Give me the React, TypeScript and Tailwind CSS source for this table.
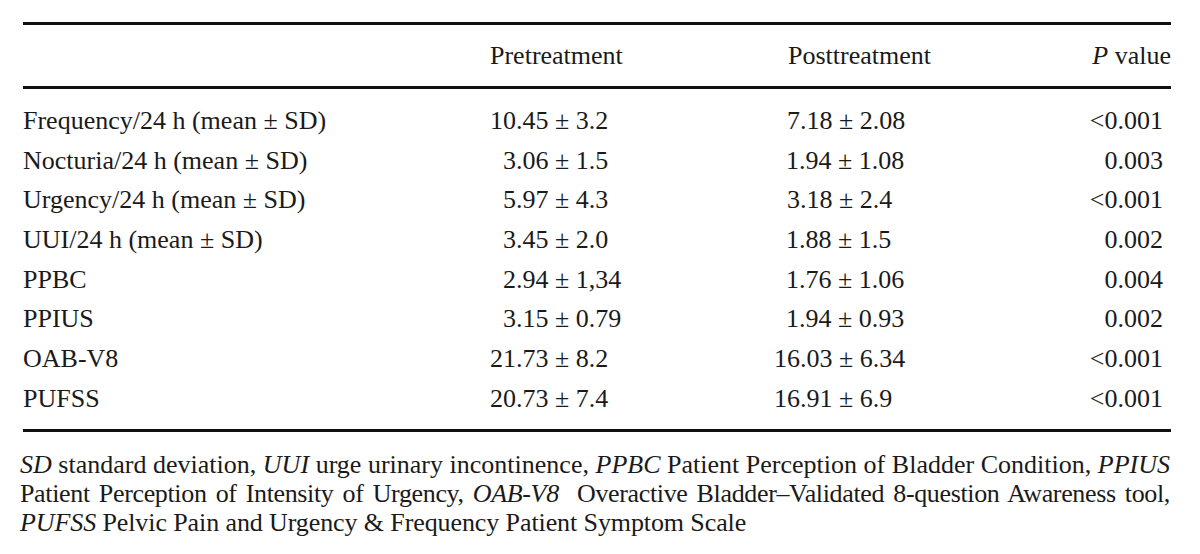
const rows: [string, string, string, string][] = [
  ["Frequency/24 h (mean ± SD)", "10.45 ± 3.2", "7.18 ± 2.08", "<0.001"],
  ["Nocturia/24 h (mean ± SD)", "3.06 ± 1.5", "1.94 ± 1.08", "0.003"],
  ["Urgency/24 h (mean ± SD)", "5.97 ± 4.3", "3.18 ± 2.4", "<0.001"],
  ["UUI/24 h (mean ± SD)", "3.45 ± 2.0", "1.88 ± 1.5", "0.002"],
  ["PPBC", "2.94 ± 1,34", "1.76 ± 1.06", "0.004"],
  ["PPIUS", "3.15 ± 0.79", "1.94 ± 0.93", "0.002"],
  ["OAB-V8", "21.73 ± 8.2", "16.03 ± 6.34", "<0.001"],
  ["PUFSS", "20.73 ± 7.4", "16.91 ± 6.9", "<0.001"],
];

// pad single-digit values so the decimal points line up
function Num({ value }: { value: string }) {
  const short = value.indexOf(".") === 1;
  return (
    <span className="whitespace-pre">
      {short ? <span className="invisible">1</span> : null}
      {value}
    </span>
  );
}

export default function App() {
  return (
    <div
      className="h-[554px] w-[1200px] bg-white pt-[22px] text-[#1a1a1a]"
      style={{ fontFamily: '"Liberation Serif", "Times New Roman", serif' }}
    >
      <div className="ml-[23px] w-[1148px] text-[26px] leading-[40px]">
        <div className="flex h-[67px] items-center border-y-[3px] border-[#111]">
          <div className="w-[467px]" />
          <div className="w-[284px]">Pretreatment</div>
          <div className="w-[250px] pl-[14px]">Posttreatment</div>
          <div className="flex-1 text-right">
            <i>P</i> value
          </div>
        </div>
        <div className="border-b-[3px] border-[#111] pt-[12px] pb-[10px]">
          {rows.map(([label, pre, post, p]) => (
            <div key={label} className="flex h-[39.7px] items-center">
              <div className="w-[467px] whitespace-pre">{label}</div>
              <div className="w-[284px]">
                <Num value={pre} />
              </div>
              <div className="w-[250px]">
                <Num value={post} />
              </div>
              <div className="flex-1 pr-[8px] text-right">{p}</div>
            </div>
          ))}
        </div>
      </div>
      <div className="ml-[20px] mt-[18px] w-[1150px] text-[26px] leading-[29px]">
        <p className="text-justify [text-align-last:justify]">
          <i>SD</i> standard deviation, <i>UUI</i> urge urinary incontinence,{" "}
          <i>PPBC</i> Patient Perception of Bladder Condition, <i>PPIUS</i>
        </p>
        <p className="text-justify tracking-[-0.35px] [text-align-last:justify]">
          Patient Perception of Intensity of Urgency, <i>OAB-V8</i>&nbsp; Overactive
          Bladder–Validated 8-question Awareness tool,
        </p>
        <p className="tracking-[-0.1px]">
          <i>PUFSS</i> Pelvic Pain and Urgency &amp; Frequency Patient Symptom Scale
        </p>
      </div>
    </div>
  );
}
